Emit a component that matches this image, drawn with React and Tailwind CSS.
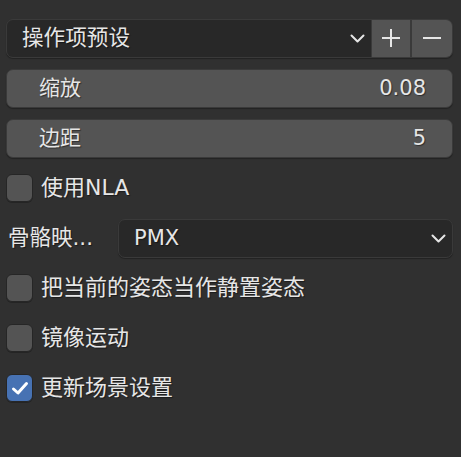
import React from "react";

const font = { fontFamily: '"DejaVu Sans", "Noto Sans CJK SC", sans-serif' };

function Chevron() {
  return (
    <svg width="15" height="9" viewBox="0 0 15 9" className="shrink-0">
      <path d="M1.5 1.5 L7.5 7.5 L13.5 1.5" fill="none" stroke="#e6e6e6" strokeWidth="2" strokeLinecap="round" strokeLinejoin="round" />
    </svg>
  );
}

function Check({ checked, label }) {
  return (
    <div className="h-[50px] flex items-center">
      <div
        className={`w-[27px] h-[28px] rounded-[6px] border border-[#262626] flex items-center justify-center shadow-[0_1px_0_rgba(0,0,0,0.25)] ${
          checked ? "bg-[#4772b3]" : "bg-[#545454]"
        }`}
      >
        {checked && (
          <svg width="18" height="15" viewBox="0 0 18 15">
            <path d="M2.5 8 L7 12 L15.5 2.5" fill="none" stroke="#ffffff" strokeWidth="3" strokeLinecap="round" strokeLinejoin="round" />
          </svg>
        )}
      </div>
      <span className="ml-[8px] text-[22px] leading-none text-[#e6e6e6] [text-shadow:1px_1px_1px_rgba(0,0,0,0.45)]">{label}</span>
    </div>
  );
}

function NumField({ label, value }) {
  return (
    <div className="h-[50px] flex items-center">
      <div className="w-full h-[39px] rounded-[7px] bg-[#545454] border border-[#3a3a3a] shadow-[0_1px_1px_rgba(0,0,0,0.3)] flex items-center justify-between pl-[32px] pr-[26px] leading-none text-[#e6e6e6] [text-shadow:1px_1px_1px_rgba(0,0,0,0.45)]">
        <span className="text-[21px]">{label}</span>
        <span className="text-[21px]">{value}</span>
      </div>
    </div>
  );
}

export default function App() {
  return (
    <div className="w-[461px] h-[457px] bg-[#303030] overflow-hidden" style={font}>
      <div className="pt-[13px] pl-[6px] pr-[8px]">
        {/* Preset row */}
        <div className="h-[50px] flex items-center">
          <div className="w-full h-[39px] flex rounded-[7px] border border-[#3a3a3a] overflow-hidden bg-[#3a3a3a] shadow-[0_1px_1px_rgba(0,0,0,0.3)]">
            <div className="flex-1 bg-[#282828] flex items-center justify-between pl-[15px] pr-[6px] leading-none text-[#e6e6e6] [text-shadow:1px_1px_1px_rgba(0,0,0,0.45)]">
              <span className="text-[21.6px]">操作项预设</span>
              <Chevron />
            </div>
            <div className="w-[38px] ml-[1px] bg-[#545454] flex items-center justify-center">
              <svg width="20" height="20" viewBox="0 0 20 20">
                <path d="M10 1 V19 M1 10 H19" stroke="#e6e6e6" strokeWidth="2" />
              </svg>
            </div>
            <div className="w-[40px] ml-[2px] bg-[#545454] flex items-center justify-center">
              <svg width="20" height="20" viewBox="0 0 20 20">
                <path d="M1 10 H19" stroke="#e6e6e6" strokeWidth="2" />
              </svg>
            </div>
          </div>
        </div>

        <NumField label="缩放" value="0.08" />
        <NumField label="边距" value="5" />

        <Check checked={false} label="使用NLA" />

        {/* Bone map row */}
        <div className="h-[50px] flex items-center">
          <span className="w-[112px] pl-[2px] text-[21.5px] leading-none text-[#e6e6e6] [text-shadow:1px_1px_1px_rgba(0,0,0,0.45)]">骨骼映...</span>
          <div className="flex-1 h-[39px] rounded-[7px] bg-[#282828] border border-[#3a3a3a] shadow-[0_1px_1px_rgba(0,0,0,0.3)] flex items-center justify-between pl-[15px] pr-[6px] text-[21px] leading-none text-[#e6e6e6] [text-shadow:1px_1px_1px_rgba(0,0,0,0.45)]">
            <span>PMX</span>
            <Chevron />
          </div>
        </div>

        <Check checked={false} label="把当前的姿态当作静置姿态" />
        <Check checked={false} label="镜像运动" />
        <Check checked={true} label="更新场景设置" />
      </div>
    </div>
  );
}
